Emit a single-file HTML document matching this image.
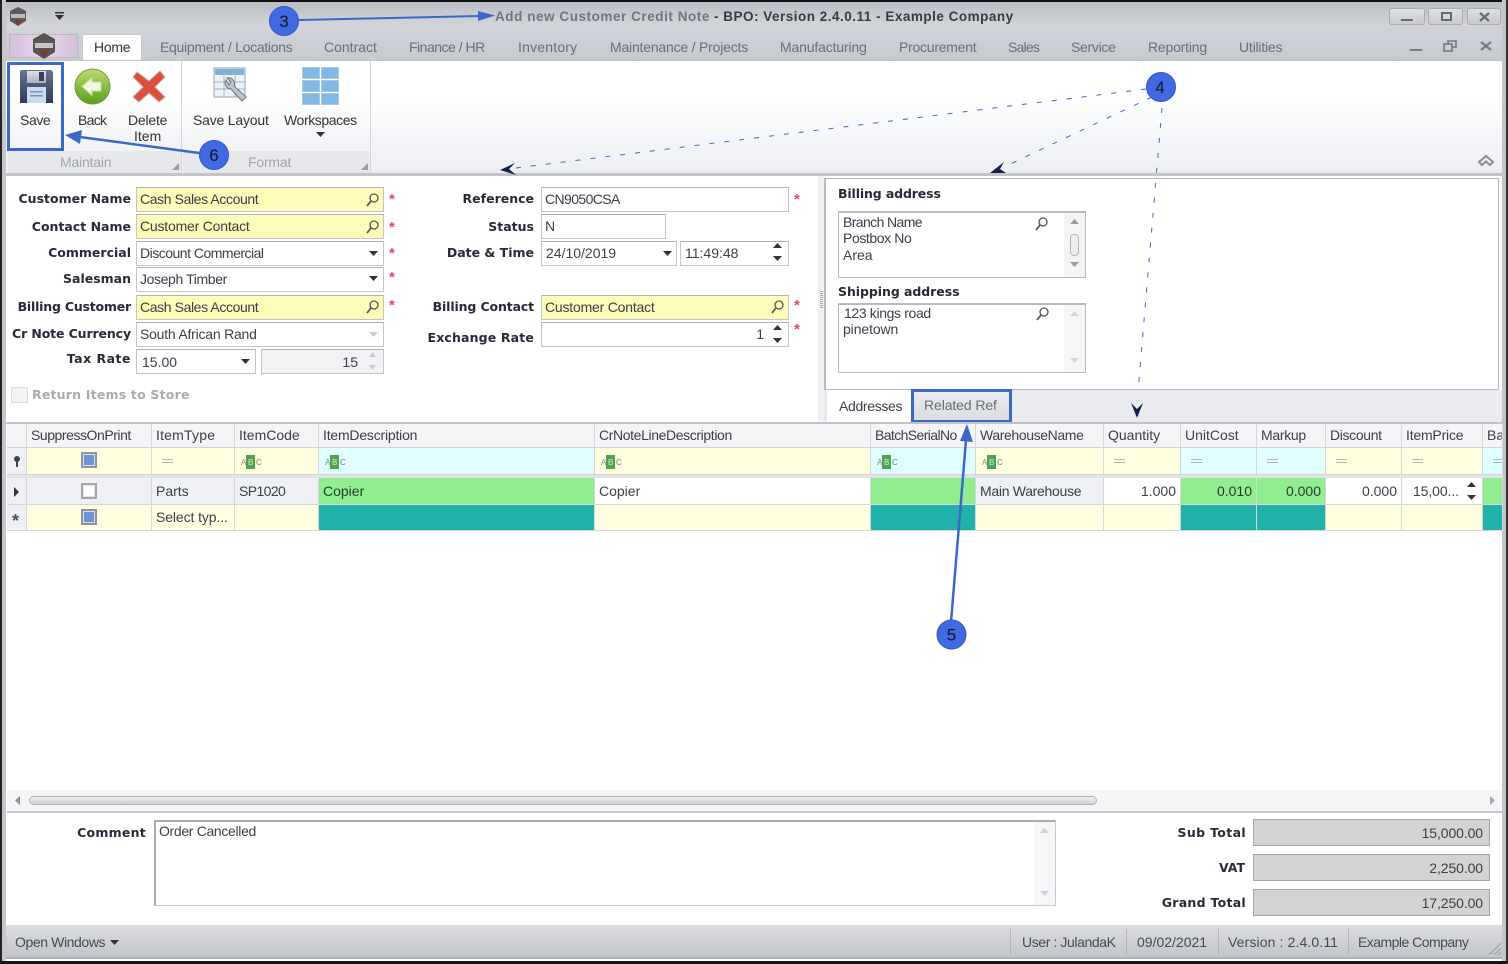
<!DOCTYPE html>
<html><head><meta charset="utf-8"><title>Add new Customer Credit Note</title>
<style>
html,body{margin:0;padding:0;background:#000}
#w{position:relative;width:1508px;height:964px;overflow:hidden;background:#fff;font:14px/16px "Liberation Sans",sans-serif;color:#3b3f4a;filter:blur(.35px)}
#w div,#w span.t{position:absolute;box-sizing:border-box}
.t{white-space:nowrap}
.l{left:0;text-align:right;font:bold 12.5px/16px "DejaVu Sans",sans-serif;color:#272b37;white-space:nowrap}
.f{border:1px solid #c2c4c9;border-top-color:#aeb0b6;background:#fff;height:25px;padding:3px 0 0 3px;white-space:nowrap}
.y{background:#fdfcb8}
.g{font:bold 15px/16px "Liberation Sans",sans-serif;color:#e2485a}
.tab{top:39px;color:#6b6f7a;white-space:nowrap}
.h{top:424px;height:24px;border-right:1px solid #d5d6da;padding:3px 0 0 4px;background:#f5f5f7;white-space:nowrap;overflow:hidden}
.c{height:26px;border-right:1px solid #d5d6da;border-bottom:1px solid #d5d6da;padding:4px 4px 0 4px;white-space:nowrap;overflow:hidden}
.ye{background:#ffffe0}.cy{background:#e0ffff}.gr{background:#90ee90}.te{background:#20b2aa}.gy{background:#eff0f3}.wh{background:#fff}
.r{text-align:right}
.eq{left:10px;top:11px;width:11px;height:4px;border-top:1px solid #b4b6bb;border-bottom:1px solid #b4b6bb}
.cb{width:16px;height:16px;border:2px solid #a3a6ad;background:#fff;box-shadow:inset 0 0 0 1px #e3e3e3}
.cb.b{background:#6f94d6;box-shadow:inset 0 0 0 1px #d8dde8;border-color:#8c93a3}
</style></head><body><div id="w">

<!-- window chrome -->
<div style="left:0;top:0;width:1508px;height:60px;background:linear-gradient(#b9bcc3,#d2d4da 40%,#c6c9d0)"></div>
<div style="left:0;top:0;width:1508px;height:2px;background:#111"></div>
<div style="left:0;top:0;width:6px;height:964px;background:#c4c6cc;border-left:2px solid #222"></div>
<div style="right:0;top:0;width:6px;height:964px;background:#c4c6cc;border-right:2px solid #333"></div>

<!-- app icon -->
<svg style="position:absolute;left:8px;top:6px" width="20" height="21"><polygon points="10,1 18,5 18,15 10,20 2,15 2,5" fill="#5f5a59"/><rect x="3" y="8" width="14" height="4" fill="#bbb"/><polygon points="6,14 14,14 10,19" fill="#7a3b35"/></svg>
<svg style="position:absolute;left:54px;top:12px" width="12" height="9"><rect x="1" y="0" width="9" height="1.5" fill="#333"/><polygon points="1,3 10,3 5.500,8" fill="#333"/></svg>

<span class="t" style="position:absolute;left:495px;top:9px;font:bold 13.500px/16px 'Liberation Sans',sans-serif;letter-spacing:.55px;color:#71757f">Add new Customer Credit Note</span>
<span class="t" style="position:absolute;left:714px;top:9px;font:bold 13.500px/16px 'Liberation Sans',sans-serif;letter-spacing:.5px;color:#383b44">- BPO: Version 2.4.0.11 - Example Company</span>

<!-- window buttons -->
<div style="left:1389px;top:8px;width:36px;height:17px;border:1px solid #a9abb2;border-radius:3px;background:linear-gradient(#dfe0e4,#c8cad0)"><div style="left:11px;top:10px;width:12px;height:2px;background:#666a73"></div></div>
<div style="left:1428px;top:8px;width:35px;height:17px;border:1px solid #a9abb2;border-radius:3px;background:linear-gradient(#dfe0e4,#c8cad0)"><div style="left:12px;top:3px;width:11px;height:9px;border:2px solid #666a73"></div></div>
<div style="left:1467px;top:8px;width:34px;height:17px;border:1px solid #a9abb2;border-radius:3px;background:linear-gradient(#dfe0e4,#c8cad0)"><svg style="position:absolute;left:10px;top:2px" width="13" height="12"><path d="M2 2L11 10M11 2L2 10" stroke="#666a73" stroke-width="2.200"/></svg></div>
<div style="left:1410px;top:49px;width:12px;height:2px;background:#767a83"></div>
<svg style="position:absolute;left:1443px;top:40px" width="15" height="12" fill="none" stroke="#767a83" stroke-width="1.600"><rect x="5" y="1" width="8" height="6"/><rect x="1" y="4" width="8" height="7" fill="#c8cad0"/></svg>
<svg style="position:absolute;left:1479px;top:40px" width="14" height="12"><path d="M2 2L12 10M12 2L2 10" stroke="#767a83" stroke-width="2.200"/></svg>

<!-- application button -->
<div style="left:9px;top:34px;width:69px;height:24px;background:linear-gradient(90deg,#d5bfe0,#e8d7ea 50%,#d6c0de);border:1px solid #bbb"></div>
<svg style="position:absolute;left:31px;top:32px" width="26" height="28"><polygon points="13,1 24,7 24,20 13,27 2,20 2,7" fill="#5a5554"/><rect x="4" y="11" width="18" height="5" fill="#c8c8c8"/><polygon points="8,19 18,19 13,26" fill="#7a3b35"/></svg>

<!-- tabs -->
<div style="left:82px;top:34px;width:60px;height:27px;background:#fff;border:1px solid #c8cad0;border-bottom:0;border-radius:2px 2px 0 0"></div>
<span class="t" style="position:absolute;left:94px;top:39px;color:#333;letter-spacing:-.25px">Home</span>
<span class="t tab" style="position:absolute;left:160px;letter-spacing:-.29px">Equipment / Locations</span>
<span class="t tab" style="position:absolute;left:324px">Contract</span>
<span class="t tab" style="position:absolute;left:409px;letter-spacing:-.5px">Finance / HR</span>
<span class="t tab" style="position:absolute;left:518px;letter-spacing:.2px">Inventory</span>
<span class="t tab" style="position:absolute;left:610px;letter-spacing:-.2px">Maintenance / Projects</span>
<span class="t tab" style="position:absolute;left:780px;letter-spacing:-.15px">Manufacturing</span>
<span class="t tab" style="position:absolute;left:899px;letter-spacing:-.25px">Procurement</span>
<span class="t tab" style="position:absolute;left:1008px;letter-spacing:-.8px">Sales</span>
<span class="t tab" style="position:absolute;left:1071px;letter-spacing:-.3px">Service</span>
<span class="t tab" style="position:absolute;left:1148px;letter-spacing:-.2px">Reporting</span>
<span class="t tab" style="position:absolute;left:1239px;letter-spacing:-.2px">Utilities</span>

<!-- ribbon -->
<div style="left:6px;top:60px;width:1496px;height:116px;background:linear-gradient(#fff 30%,#eceef2);border-top:1px solid #c4c6cc;border-bottom:3px solid #c2c4c9"></div>
<div style="left:181px;top:61px;width:1px;height:112px;background:#d3d5da"></div>
<div style="left:370px;top:61px;width:1px;height:112px;background:#d3d5da"></div>
<div style="left:8px;top:151px;width:173px;height:22px;background:#e6e8ec"></div>
<div style="left:183px;top:151px;width:186px;height:22px;background:#e6e8ec"></div>
<span class="t" style="position:absolute;left:60px;top:154px;color:#a2a5ac;letter-spacing:-.2px">Maintain</span>
<span class="t" style="position:absolute;left:248px;top:154px;color:#a2a5ac;letter-spacing:-.2px">Format</span>
<svg style="position:absolute;left:172px;top:163px" width="7" height="7"><polygon points="7,0 7,7 0,7" fill="#9a9ca3"/></svg>
<svg style="position:absolute;left:361px;top:163px" width="7" height="7"><polygon points="7,0 7,7 0,7" fill="#9a9ca3"/></svg>

<!-- Save icon -->
<svg style="position:absolute;left:19px;top:69px" width="35" height="35"><defs><linearGradient id="sv" x1="0" y1="0" x2="0" y2="1"><stop offset="0" stop-color="#66748f"/><stop offset="1" stop-color="#2f3b57"/></linearGradient><linearGradient id="sh" x1="0" y1="0" x2="0" y2="1"><stop offset="0" stop-color="#dfe2e8"/><stop offset="1" stop-color="#aab0bc"/></linearGradient></defs><path d="M2 1H32L34 3V34H1V2Z" fill="url(#sv)"/><rect x="8" y="2" width="19" height="12" fill="url(#sh)"/><rect x="20" y="3" width="5" height="9" fill="#34405c"/><rect x="8" y="18" width="19" height="16" fill="#c9d9ee"/><rect x="11" y="22" width="13" height="1.500" fill="#7f94b2"/><rect x="11" y="26" width="13" height="1.500" fill="#7f94b2"/></svg>
<!-- Back icon -->
<svg style="position:absolute;left:74px;top:68px" width="37" height="37"><defs><linearGradient id="bg" x1="0" y1="0" x2="0" y2="1"><stop offset="0" stop-color="#bcdc6c"/><stop offset="1" stop-color="#58a01e"/></linearGradient></defs><circle cx="18.500" cy="18.500" r="17.500" fill="url(#bg)" stroke="#6f9c3a"/><path d="M8 18.500L18 9.500V14H27V23H18V27.500Z" fill="#f1f6e0" stroke="#c7dc9c"/></svg>
<!-- Delete icon -->
<svg style="position:absolute;left:132px;top:70px" width="34" height="33"><path d="M5 2L17 11L28 1L33 7L23 17L33 27L27 32L17 23L7 32L1 27L11 17L1 7Z" fill="#dc4f3c" stroke="#c8b0aa"/></svg>
<!-- Save layout icon -->
<svg style="position:absolute;left:213px;top:67px" width="38" height="38"><rect x="1" y="1" width="31" height="29" fill="#eef3f7" stroke="#8fa3b2"/><rect x="2" y="2" width="29" height="6" fill="#7fb2d8"/><path d="M1 15H32M1 22H32M11 1V30M22 1V30" stroke="#9db6c8"/><path d="M13 13a6 6 0 0 0 5 9l11 12 4-4-12-11a6 6 0 0 0-7-8l4 4-2 3z" fill="#c2c6cc" stroke="#6f747c"/></svg>
<!-- Workspaces icon -->
<svg style="position:absolute;left:302px;top:67px" width="37" height="38"><g fill="#82b8e4" stroke="#a6c9e8"><rect x=".5" y=".5" width="17" height="11"/><rect x="19.500" y=".5" width="17" height="11"/><rect x=".5" y="13.500" width="17" height="11"/><rect x="19.500" y="13.500" width="17" height="11"/><rect x=".5" y="26.500" width="17" height="11"/><rect x="19.500" y="26.500" width="17" height="11"/></g></svg>

<span class="t" style="position:absolute;left:20px;top:112px;color:#333;letter-spacing:-.4px">Save</span>
<span class="t" style="position:absolute;left:78px;top:112px;color:#333;letter-spacing:-.7px">Back</span>
<span class="t" style="position:absolute;left:128px;top:112px;color:#333;letter-spacing:-.2px">Delete</span>
<span class="t" style="position:absolute;left:134px;top:128px;color:#333">Item</span>
<span class="t" style="position:absolute;left:193px;top:112px;color:#333;letter-spacing:-.2px">Save Layout</span>
<span class="t" style="position:absolute;left:284px;top:112px;color:#333;letter-spacing:-.4px">Workspaces</span>
<svg style="position:absolute;left:316px;top:132px" width="10" height="6"><polygon points="0,0 9,0 4.500,5" fill="#333"/></svg>
<svg style="position:absolute;left:1477px;top:153px" width="18" height="14" fill="none" stroke="#8b8d93" stroke-width="2"><path d="M2 9L9 3L16 9L13 12L9 8.500L5 12Z"/></svg>

<!-- left form -->
<div class="l" style="width:131px;top:191px">Customer Name</div>
<div class="l" style="width:131px;top:219px">Contact Name</div>
<div class="l" style="width:131px;top:245px">Commercial</div>
<div class="l" style="width:131px;top:271px">Salesman</div>
<div class="l" style="width:131px;top:299px;letter-spacing:-.2px">Billing Customer</div>
<div class="l" style="width:131px;top:326px;letter-spacing:-.12px">Cr Note Currency</div>
<div class="l" style="width:131px;top:351px;letter-spacing:.5px">Tax Rate</div>

<div class="f y" style="left:136px;top:187px;width:248px;letter-spacing:-.39px">Cash Sales Account</div>
<div class="f y" style="left:136px;top:214px;width:248px;letter-spacing:-.2px">Customer Contact</div>
<div class="f" style="left:136px;top:241px;width:248px;letter-spacing:-.5px">Discount Commercial</div>
<div class="f" style="left:136px;top:267px;width:248px;letter-spacing:-.38px">Joseph Timber</div>
<div class="f y" style="left:136px;top:295px;width:248px;letter-spacing:-.39px">Cash Sales Account</div>
<div class="f" style="left:136px;top:322px;width:248px;letter-spacing:-.22px">South African Rand</div>
<div class="f" style="left:136px;top:349px;width:120px;padding-left:5px;padding-top:4px">15.00</div>
<div class="f r" style="left:261px;top:349px;width:123px;background:#f2f2f4;padding:4px 25px 0 0">15</div>

<span class="t g" style="position:absolute;left:389px;top:192px">*</span>
<span class="t g" style="position:absolute;left:389px;top:220px">*</span>
<span class="t g" style="position:absolute;left:389px;top:246px">*</span>
<span class="t g" style="position:absolute;left:389px;top:270px">*</span>
<span class="t g" style="position:absolute;left:389px;top:298px">*</span>
<span class="t g" style="position:absolute;left:794px;top:192px">*</span>
<span class="t g" style="position:absolute;left:794px;top:298px">*</span>
<span class="t g" style="position:absolute;left:794px;top:322px">*</span>

<div style="left:11px;top:387px;width:17px;height:16px;border:1px solid #dcdcdf;background:#f3f3f4"></div>
<div class="l" style="left:32px;top:387px;color:#a9abb1;letter-spacing:.2px">Return Items to Store</div>

<!-- middle form -->
<div class="l" style="width:534px;top:191px">Reference</div>
<div class="l" style="width:534px;top:219px">Status</div>
<div class="l" style="width:534px;top:245px">Date &amp; Time</div>
<div class="l" style="width:534px;top:299px;letter-spacing:-.13px">Billing Contact</div>
<div class="l" style="width:534px;top:330px;letter-spacing:.15px">Exchange Rate</div>
<div class="f" style="left:541px;top:187px;width:248px;letter-spacing:-.6px">CN9050CSA</div>
<div class="f" style="left:541px;top:214px;width:125px">N</div>
<div class="f" style="left:541px;top:241px;width:136px;padding-left:4px">24/10/2019</div>
<div class="f" style="left:680px;top:241px;width:109px;padding-left:4px">11:49:48</div>
<div class="f y" style="left:541px;top:295px;width:248px;letter-spacing:-.2px">Customer Contact</div>
<div class="f r" style="left:541px;top:322px;width:248px;padding-right:24px">1</div>

<!-- splitter -->
<div style="left:818px;top:176px;width:6px;height:247px;background:#eef0f3"></div>
<div style="left:820px;top:291px;width:3px;height:17px;background:repeating-linear-gradient(#a8aab0 0 1px,transparent 1px 2px)"></div>

<!-- right tab panel -->
<div style="left:824px;top:178px;width:675px;height:212px;background:#fff;border:1px solid #b6b8be;border-left-width:2px"></div>
<div style="left:824px;top:390px;width:678px;height:33px;background:#e9ebef"></div>
<div style="left:827px;top:390px;width:84px;height:33px;background:#fff"></div>
<span class="t" style="position:absolute;left:839px;top:398px;letter-spacing:-.33px">Addresses</span>
<div style="left:911px;top:389px;width:101px;height:34px;background:linear-gradient(#e9ebef,#dcdde2);border:3px solid #3c68c7"></div>
<span class="t" style="position:absolute;left:924px;top:397px;color:#6b6e78;letter-spacing:-.1px">Related Ref</span>

<div class="l" style="left:838px;top:186px;letter-spacing:-.13px">Billing address</div>
<div class="l" style="left:838px;top:284px;letter-spacing:-.06px">Shipping address</div>
<div style="left:838px;top:211px;width:248px;height:67px;border:1px solid #b8bac0;border-top-width:2px;background:#fff"></div>
<div style="left:1064px;top:213px;width:21px;height:64px;background:#f3f4f6"></div>
<span class="t" style="position:absolute;left:843px;top:214px;line-height:16.300px;white-space:pre"><span style="letter-spacing:-.6px">Branch Name</span>
<span style="letter-spacing:-.4px">Postbox No</span>
Area</span>
<div style="left:1070px;top:234px;width:9px;height:22px;border:1px solid #b3b5ba;border-radius:4px;background:#eceef0"></div>
<svg style="position:absolute;left:1068px;top:218px" width="13" height="52"><polygon points="2,6 11,6 6.500,1" fill="#9a9ca2"/><polygon points="2,44 11,44 6.500,49" fill="#9a9ca2"/></svg>

<div style="left:838px;top:303px;width:248px;height:70px;border:1px solid #b8bac0;border-top-width:2px;background:#fff"></div>
<div style="left:1064px;top:305px;width:21px;height:67px;background:#f5f6f7"></div>
<span class="t" style="position:absolute;left:844px;top:305px;letter-spacing:-.36px">123 kings road</span>
<span class="t" style="position:absolute;left:843px;top:321px;letter-spacing:-.1px">pinetown</span>
<svg style="position:absolute;left:1068px;top:310px" width="13" height="56"><polygon points="2,6 11,6 6.500,1" fill="#d3d4d8"/><polygon points="2,48 11,48 6.500,53" fill="#d3d4d8"/></svg>

<!-- grid -->
<div style="left:6px;top:422px;width:1497px;height:2px;background:#c2c4c9"></div>
<div class="h" style="left:7px;width:20px"></div>
<div class="h" style="left:27px;width:125px;letter-spacing:-.45px">SuppressOnPrint</div>
<div class="h" style="left:152px;width:83px;letter-spacing:.2px">ItemType</div>
<div class="h" style="left:235px;width:84px">ItemCode</div>
<div class="h" style="left:319px;width:276px;letter-spacing:-.2px">ItemDescription</div>
<div class="h" style="left:595px;width:276px;letter-spacing:-.38px">CrNoteLineDescription</div>
<div class="h" style="left:871px;width:105px;letter-spacing:-.6px">BatchSerialNo</div>
<div class="h" style="left:976px;width:128px;letter-spacing:-.38px">WarehouseName</div>
<div class="h" style="left:1104px;width:77px">Quantity</div>
<div class="h" style="left:1181px;width:76px">UnitCost</div>
<div class="h" style="left:1257px;width:69px;letter-spacing:-.3px">Markup</div>
<div class="h" style="left:1326px;width:76px;letter-spacing:-.35px">Discount</div>
<div class="h" style="left:1402px;width:81px;letter-spacing:-.2px">ItemPrice</div>
<div class="h" style="left:1483px;width:20px">Ba</div>
<div style="left:7px;top:447px;width:1496px;height:1px;background:#d0d2d6"></div>

<!-- filter row -->
<div class="c gy" style="left:7px;top:448px;width:20px;height:27px"></div>
<div class="c ye" style="left:27px;top:448px;width:125px;height:27px"></div>
<div class="c ye" style="left:152px;top:448px;width:83px;height:27px"><div class="eq"></div></div>
<div class="c ye" style="left:235px;top:448px;width:84px;height:27px"></div>
<div class="c cy" style="left:319px;top:448px;width:276px;height:27px"></div>
<div class="c ye" style="left:595px;top:448px;width:276px;height:27px"></div>
<div class="c cy" style="left:871px;top:448px;width:105px;height:27px"></div>
<div class="c ye" style="left:976px;top:448px;width:128px;height:27px"></div>
<div class="c ye" style="left:1104px;top:448px;width:77px;height:27px"><div class="eq"></div></div>
<div class="c cy" style="left:1181px;top:448px;width:76px;height:27px"><div class="eq"></div></div>
<div class="c cy" style="left:1257px;top:448px;width:69px;height:27px"><div class="eq"></div></div>
<div class="c ye" style="left:1326px;top:448px;width:76px;height:27px"><div class="eq"></div></div>
<div class="c ye" style="left:1402px;top:448px;width:81px;height:27px"><div class="eq"></div></div>
<div class="c cy" style="left:1483px;top:448px;width:20px;height:27px"><div class="eq"></div></div>
<div style="left:7px;top:475px;width:1496px;height:3px;background:#e2e3e6"></div>

<div class="cb b" style="left:81px;top:452px"></div>
<svg style="position:absolute;left:12px;top:456px" width="10" height="12"><circle cx="5" cy="3" r="3" fill="#3f4450"/><rect x="4" y="5" width="2" height="6" fill="#3f4450"/></svg>

<svg style="position:absolute;left:0;top:455px" width="1100" height="16" font-family="Liberation Sans, sans-serif" font-size="8">
 <g>
  <rect x="246" y="0" width="9" height="14" fill="#4ea24e"/><text x="241" y="10" fill="#7f8a7f">A</text><text x="248" y="10" fill="#d8efd8">B</text><text x="256" y="10" fill="#6f7a6f">C</text>
  <rect x="330" y="0" width="9" height="14" fill="#4ea24e"/><text x="325" y="10" fill="#7f8a7f">A</text><text x="332" y="10" fill="#d8efd8">B</text><text x="340" y="10" fill="#6f7a6f">C</text>
  <rect x="606" y="0" width="9" height="14" fill="#4ea24e"/><text x="601" y="10" fill="#7f8a7f">A</text><text x="608" y="10" fill="#d8efd8">B</text><text x="616" y="10" fill="#6f7a6f">C</text>
  <rect x="882" y="0" width="9" height="14" fill="#4ea24e"/><text x="877" y="10" fill="#7f8a7f">A</text><text x="884" y="10" fill="#d8efd8">B</text><text x="892" y="10" fill="#6f7a6f">C</text>
  <rect x="987" y="0" width="9" height="14" fill="#4ea24e"/><text x="982" y="10" fill="#7f8a7f">A</text><text x="989" y="10" fill="#d8efd8">B</text><text x="997" y="10" fill="#6f7a6f">C</text>
 </g>
</svg>

<!-- data row -->
<div class="c gy" style="left:7px;top:478px;width:20px;height:27px"></div>
<div class="c gy" style="left:27px;top:478px;width:125px;height:27px"></div>
<div class="c gy" style="left:152px;top:478px;width:83px;height:27px;padding-top:5px">Parts</div>
<div class="c gy" style="left:235px;top:478px;width:84px;height:27px;padding-top:5px;letter-spacing:-.6px">SP1020</div>
<div class="c gr" style="left:319px;top:478px;width:276px;height:27px;padding-top:5px;color:#2f3a2f">Copier</div>
<div class="c wh" style="left:595px;top:478px;width:276px;height:27px;padding-top:5px">Copier</div>
<div class="c gr" style="left:871px;top:478px;width:105px;height:27px"></div>
<div class="c gy" style="left:976px;top:478px;width:128px;height:27px;padding-top:5px;letter-spacing:-.29px">Main Warehouse</div>
<div class="c wh r" style="left:1104px;top:478px;width:77px;height:27px;padding-top:5px">1.000</div>
<div class="c gr r" style="left:1181px;top:478px;width:76px;height:27px;padding-top:5px;color:#2f3a2f">0.010</div>
<div class="c gr r" style="left:1257px;top:478px;width:69px;height:27px;padding-top:5px;color:#2f3a2f">0.000</div>
<div class="c wh r" style="left:1326px;top:478px;width:76px;height:27px;padding-top:5px">0.000</div>
<div class="c wh" style="left:1402px;top:478px;width:81px;height:27px;padding-top:5px;padding-left:11px;letter-spacing:-.1px">15,00...</div>
<div class="c gr" style="left:1483px;top:478px;width:20px;height:27px"></div>
<div class="cb" style="left:81px;top:483px"></div>
<svg style="position:absolute;left:14px;top:487px" width="6" height="10"><polygon points="0,0 5,5 0,10" fill="#333"/></svg>

<!-- new row -->
<div class="c gy" style="left:7px;top:505px;width:20px"></div>
<div class="c ye" style="left:27px;top:505px;width:125px"></div>
<div class="c ye" style="left:152px;top:505px;width:83px;letter-spacing:-.1px">Select typ...</div>
<div class="c ye" style="left:235px;top:505px;width:84px"></div>
<div class="c te" style="left:319px;top:505px;width:276px"></div>
<div class="c ye" style="left:595px;top:505px;width:276px"></div>
<div class="c te" style="left:871px;top:505px;width:105px"></div>
<div class="c ye" style="left:976px;top:505px;width:128px"></div>
<div class="c ye" style="left:1104px;top:505px;width:77px"></div>
<div class="c te" style="left:1181px;top:505px;width:76px"></div>
<div class="c te" style="left:1257px;top:505px;width:69px"></div>
<div class="c ye" style="left:1326px;top:505px;width:76px"></div>
<div class="c ye" style="left:1402px;top:505px;width:81px"></div>
<div class="c te" style="left:1483px;top:505px;width:20px"></div>
<div class="cb b" style="left:81px;top:509px"></div>
<span class="t" style="position:absolute;left:12px;top:512px;font:bold 18px/18px 'Liberation Sans',sans-serif;color:#4a4f5b">*</span>

<!-- scrollbar -->
<div style="left:7px;top:790px;width:1495px;height:23px;background:#f4f5f7;border-bottom:2px solid #c6c8cd"></div>
<div style="left:29px;top:796px;width:1068px;height:9px;border:1px solid #b2b4ba;border-radius:5px;background:linear-gradient(#eceef1,#cfd1d6)"></div>
<svg style="position:absolute;left:14px;top:796px" width="7" height="10"><polygon points="6,0 6,9 1,4.500" fill="#8e9096"/></svg>
<svg style="position:absolute;left:1489px;top:796px" width="7" height="10"><polygon points="1,0 1,9 6,4.500" fill="#a6a8ae"/></svg>

<!-- comment -->
<div class="l" style="width:146px;top:825px;letter-spacing:.25px">Comment</div>
<div style="left:154px;top:820px;width:902px;height:86px;border:1px solid #c8cacf;border-top:2px solid #a9abb1;border-left:2px solid #a9abb1;background:#fff"></div>
<div style="left:1034px;top:822px;width:21px;height:83px;background:#f5f6f7"></div>
<svg style="position:absolute;left:1039px;top:827px" width="11" height="72"><polygon points="1,6 10,6 5.500,1" fill="#d0d1d5"/><polygon points="1,64 10,64 5.500,69" fill="#d0d1d5"/></svg>
<span class="t" style="position:absolute;left:159px;top:823px;letter-spacing:-.33px">Order Cancelled</span>

<!-- totals -->
<div class="l" style="width:1246px;top:825px;letter-spacing:.35px">Sub Total</div>
<div class="l" style="width:1245px;top:860px">VAT</div>
<div class="l" style="width:1246px;top:895px;letter-spacing:.28px">Grand Total</div>
<div class="r" style="left:1253px;top:819px;width:237px;height:27px;background:#d3d3d3;border:1px solid #a4a6aa;padding:5px 6px 0 0;letter-spacing:-.1px">15,000.00</div>
<div class="r" style="left:1253px;top:854px;width:237px;height:27px;background:#d3d3d3;border:1px solid #a4a6aa;padding:5px 6px 0 0;letter-spacing:-.1px">2,250.00</div>
<div class="r" style="left:1253px;top:889px;width:237px;height:27px;background:#d3d3d3;border:1px solid #a4a6aa;padding:5px 6px 0 0;letter-spacing:-.1px">17,250.00</div>

<!-- status bar -->
<div style="left:6px;top:925px;width:1496px;height:34px;background:linear-gradient(#dcdde1,#c3c5cc);border-bottom:2px solid #aeb0b8"></div>
<div style="left:0;top:961px;width:1508px;height:3px;background:#151515"></div>
<span class="t" style="position:absolute;left:15px;top:934px;color:#464a55;letter-spacing:-.4px">Open Windows</span>
<svg style="position:absolute;left:110px;top:940px" width="9" height="6"><polygon points="0,0 9,0 4.500,5" fill="#333"/></svg>
<span class="t" style="position:absolute;left:1022px;top:934px;color:#464a55;letter-spacing:-.4px">User : JulandaK</span>
<span class="t" style="position:absolute;left:1137px;top:934px;color:#464a55">09/02/2021</span>
<span class="t" style="position:absolute;left:1228px;top:934px;color:#464a55;letter-spacing:.12px">Version : 2.4.0.11</span>
<span class="t" style="position:absolute;left:1358px;top:934px;color:#464a55;letter-spacing:-.53px">Example Company</span>
<div style="left:1010px;top:929px;width:1px;height:26px;background:#b3b5bc"></div>
<div style="left:1126px;top:929px;width:1px;height:26px;background:#b3b5bc"></div>
<div style="left:1218px;top:929px;width:1px;height:26px;background:#b3b5bc"></div>
<div style="left:1348px;top:929px;width:1px;height:26px;background:#b3b5bc"></div>
<svg style="position:absolute;left:1488px;top:942px" width="14" height="14" stroke="#9a9ca3"><path d="M1 13L13 1M6 13L13 6M10 13L13 10"/></svg>

<!-- field glyphs: magnifiers, drop-downs, spinners -->
<svg style="position:absolute;left:0;top:0" width="1508" height="964">
 <defs><g id="m" fill="none" stroke="#555"><circle cx="6" cy="5" r="4" stroke-width="1.300"/><path d="M3 8L-1 13" stroke-width="1.800"/></g>
 <polygon id="d" points="0,0 9,0 4.500,5" fill="#333"/>
 <polygon id="u" points="0,5 9,5 4.500,0" fill="#333"/></defs>
 <use href="#m" x="368" y="193"/><use href="#m" x="368" y="220"/><use href="#m" x="368" y="300"/><use href="#m" x="773" y="300"/>
 <use href="#m" x="1037" y="217"/><use href="#m" x="1038" y="307"/>
 <use href="#d" x="369" y="251"/><use href="#d" x="369" y="276"/><use href="#d" x="241" y="359"/><use href="#d" x="663" y="251"/>
 <polygon points="369,332 378,332 373.500,337" fill="#c9cbd0"/>
 <polygon points="369,357 376,357 372.500,352" fill="#c9cbd0"/><polygon points="369,365 376,365 372.500,370" fill="#c9cbd0"/>
 <use href="#u" x="773" y="243"/><use href="#d" x="773" y="256"/>
 <use href="#u" x="773" y="325"/><use href="#d" x="773" y="338"/>
 <use href="#u" x="1467" y="482"/><use href="#d" x="1467" y="495"/>
</svg>

<!-- annotations -->
<div style="left:7px;top:62px;width:57px;height:89px;border:3px solid #3c68c7"></div>
<svg style="position:absolute;left:0;top:0" width="1508" height="964" font-family="Liberation Sans, sans-serif">
 <g stroke="#3c68c7" stroke-width="2" fill="#3c68c7">
  <path d="M299 20L480 16" fill="none"/><polygon points="495,15.500 478,11 478,21" stroke="none"/>
  <path d="M214 155L80 137" fill="none" stroke-width="2.500"/><polygon points="65,135 82,130 80,144" stroke="none"/>
  <path d="M951 622L966 440" fill="none" stroke-width="2.500"/><polygon points="967,424 973,442 960,441" stroke="none"/>
 </g>
 <g stroke="#3c68c7" stroke-width="1" fill="none" stroke-dasharray="5 10">
  <path d="M1146 89L516 168"/>
  <path d="M1152 97L1004 167"/>
  <path d="M1162 108L1138 392"/>
 </g>
 <g fill="#12224f">
  <path d="M515 163L500 170L516 175L509 169Z"/>
  <path d="M1004 162L990 173L1006 173L1000 169Z"/>
  <path d="M1131 403L1137 418L1143 403L1137 409Z"/>
 </g>
 <g fill="#4169e1" stroke="#3158c8">
  <circle cx="284" cy="21" r="14.500"/>
  <circle cx="1161" cy="87" r="14.500"/>
  <circle cx="951.500" cy="634.500" r="14.500"/>
  <circle cx="214" cy="155" r="14.500"/>
 </g>
 <g font-size="17" text-anchor="middle" fill="#10152b">
  <text x="284" y="27">3</text>
  <text x="1160" y="93">4</text>
  <text x="951.500" y="640.500">5</text>
  <text x="214" y="161">6</text>
 </g>
</svg>
</div></body></html>
